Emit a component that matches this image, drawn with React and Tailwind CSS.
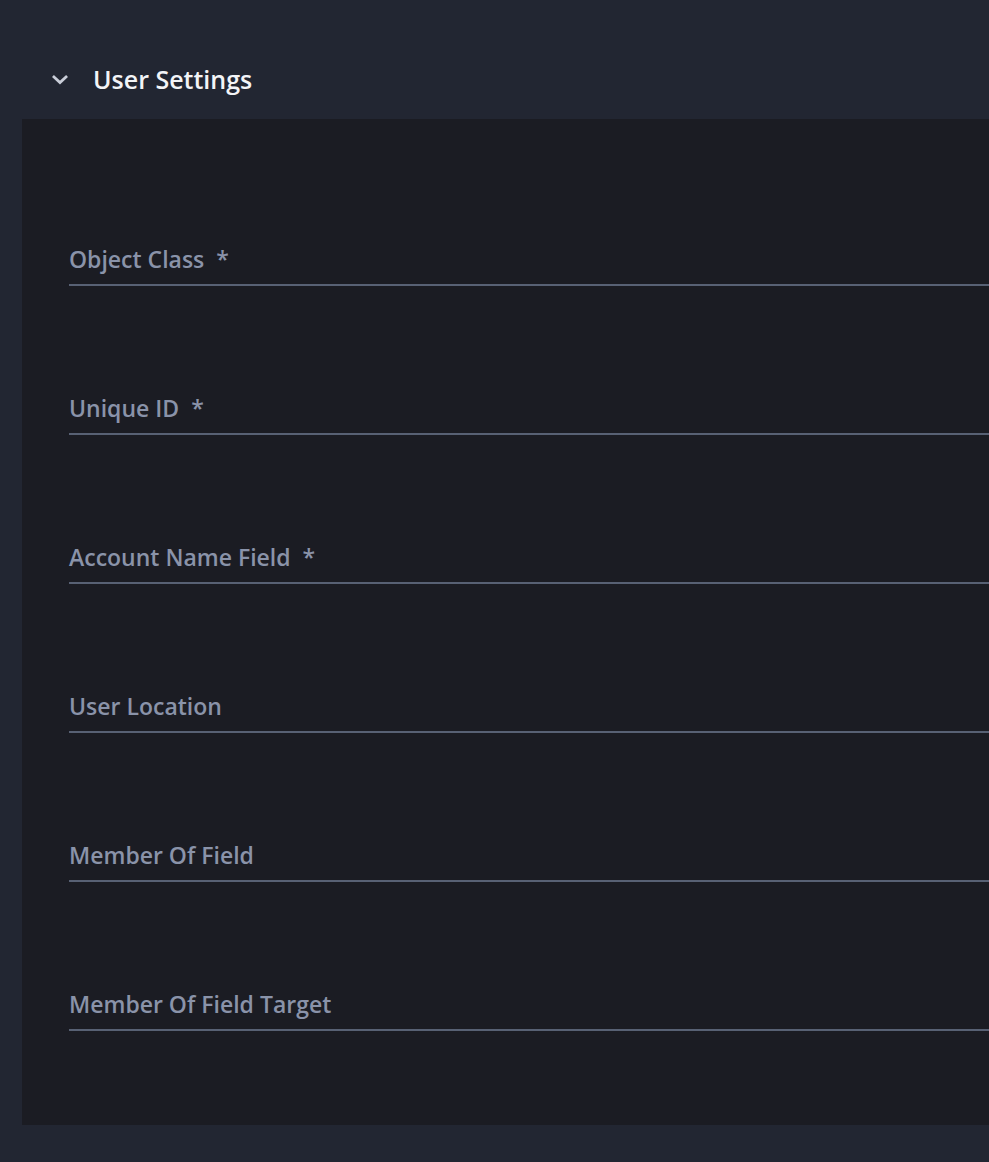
const fields = [
    { label: 'Object Class', required: true },
    { label: 'Unique ID', required: true },
    { label: 'Account Name Field', required: true },
    { label: 'User Location', required: false },
    { label: 'Member Of Field', required: false },
    { label: 'Member Of Field Target', required: false },
];

const App = () => {
    return (
        <div
            className="min-h-[1162px] bg-[#222632] overflow-hidden"
            style={{ fontFamily: '"Open Sans", Lato, sans-serif' }}
        >
            {/* Section header */}
            <div className="flex items-center h-[119px] pt-[50px] pb-[10px] pl-[50px]">
                <svg className="w-[20px] h-[20px] text-[#c9cdd8]" viewBox="0 0 20 20" fill="none">
                    <path d="M4 7l6 5.5 6-5.5" stroke="currentColor" strokeWidth="2.8" strokeLinecap="square" />
                </svg>
                <span className="ml-[23px] text-[25px] font-semibold text-[#f3f4f7] leading-none">
                    User Settings
                </span>
            </div>

            {/* Panel */}
            <div className="ml-[22px] bg-[#1b1c23] pt-[18px] pb-[94px] pl-[47px]">
                {fields.map((field) => (
                    <div
                        key={field.label}
                        className="h-[149px] flex flex-col justify-end border-b-2 border-[#586174]"
                    >
                        <div className="flex items-center pb-[11px] text-[23px] leading-[28px] font-semibold text-[#8a93a9]">
                            <span>{field.label}</span>
                            {field.required && <span className="ml-[12px]">*</span>}
                        </div>
                    </div>
                ))}
            </div>
        </div>
    );
};

export default App;
